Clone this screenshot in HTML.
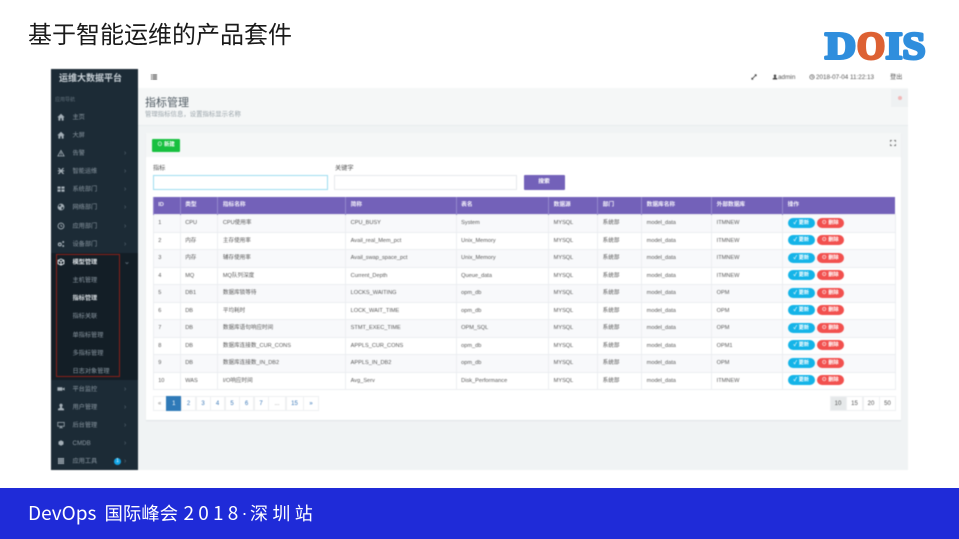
<!DOCTYPE html>
<html lang="zh"><head><meta charset="utf-8"><title>DOIS</title>
<style>
html,body{margin:0;padding:0;background:#fff}
body{width:959px;height:539px;position:relative;overflow:hidden;font-family:"Liberation Sans","Noto Sans CJK SC",sans-serif}
.title{position:absolute;left:28px;top:16px;font-size:24px;line-height:34px;color:#1a1a1a;white-space:nowrap;font-family:"WenQuanYi Zen Hei","Noto Sans CJK SC",sans-serif}
.foot{position:absolute;left:0;top:488px;width:959px;height:51px;background:#1f2bd8}
.foot span{position:absolute;top:10px;color:#fff;font-size:18px;line-height:30px;white-space:nowrap;font-family:"WenQuanYi Zen Hei","Noto Sans CJK SC",sans-serif}
.app{position:absolute;left:51px;top:69px;width:857px;height:401px;background:#f0f3f4;overflow:hidden;filter:blur(.4px);font-size:5.6px;color:#5a5a5a}
.a{position:absolute;white-space:nowrap}
.side{position:absolute;left:0;top:0;width:87px;height:401px;background:#1c2b36}
.brand{position:absolute;left:8px;top:3px;font-size:9px;line-height:12px;font-weight:bold;color:#c8d0d6}
.m{position:absolute;left:0;width:87px;height:18px;line-height:20px;color:#8b98a2;font-size:6.2px}
.m b{position:absolute;left:21.5px;font-weight:normal;white-space:nowrap}
.m svg{position:absolute;left:6px;top:5px;width:8px;height:8px;fill:#a3aeb6}
.m u{position:absolute;left:73px;top:0;text-decoration:none;color:#5a6a76;font-size:7px}
.subbg{position:absolute;left:0;top:184px;width:87px;height:127px;background:#131e26}
.redbox{position:absolute;left:4.5px;top:185px;width:62px;height:121px;border:1px solid #8a2018}
.top{position:absolute;left:87px;top:0;width:770px;height:19px;background:#fff}
.phead{position:absolute;left:87px;top:19px;width:770px;height:38px;background:#f5f7f7;border-bottom:1px solid #e8ecee;box-sizing:border-box}
.card{position:absolute;left:95px;top:64px;width:755px;height:287px;background:#fff;box-shadow:0 1px 1px #dfe4e6}
.chead{position:absolute;left:0;top:0;width:755px;height:24px;background:#f5f7f7}
.btn{position:absolute;background:#17c03f;color:#fff;border-radius:1px;font-weight:bold;text-align:center}
.inp{position:absolute;height:15px;box-sizing:border-box;background:#fff;border:1px solid #e6e9ec}
table{position:absolute;left:101.7px;top:128px;width:743px;border-collapse:collapse;table-layout:fixed;font-size:5.6px;color:#5a5a5a;background:#fff}
th{background:#7361b9;color:#f4f2fb;height:17px;line-height:17px;padding:0 0 0 4.5px;text-align:left;font-weight:bold;border-left:1px solid #9488cc;font-size:5.7px;box-sizing:border-box}
td{height:17.5px;line-height:16.5px;padding:0 0 0 4.5px;border:1px solid #eceef1;box-sizing:border-box;white-space:nowrap;overflow:hidden}
tr:nth-child(odd) td{background:#f8f9fb}
.p{display:inline-block;height:10px;line-height:10px;border-radius:5px;color:#fff;font-size:5.2px;width:27px;text-align:center;vertical-align:middle;font-weight:bold}
.u{background:#14b4e8;margin-right:2px}
.d{background:#f2504e}
.pg{position:absolute;top:327px;height:15px;line-height:15px;text-align:center;background:#fff;border:1px solid #eef0f2;box-sizing:border-box;color:#3a78b8;font-size:6px}
</style></head><body>
<svg width="0" height="0" style="position:absolute"><defs>
<symbol id="home" viewBox="0 0 8 8"><path d="M4 .8 .3 4.2h1.1V7.6h1.9V5.3h1.4v2.3h1.9V4.2h1.1z"/></symbol>
<symbol id="warn" viewBox="0 0 8 8"><path fill-rule="evenodd" d="M4 .6 7.8 7.4H.2zM4 2.2 1.6 6.6h4.8zM3.6 3.4h.8v1.8h-.8zM3.6 5.5h.8v.7h-.8z"/></symbol>
<symbol id="ai" viewBox="0 0 8 8"><path d="M.8 1h1.6l1.6 2 1.6-2h1.6L5.2 3.2h2v1.2H5.3L7.2 7H5.6L4 5 2.4 7H.8l1.9-2.6H.8V3.2h2z"/></symbol>
<symbol id="grid" viewBox="0 0 8 8"><path d="M.5 1.5h3.1v2.2H.5zM4.4 1.5h3.1v2.2H4.4zM.5 4.5h3.1v2.2H.5zM4.4 4.5h3.1v2.2H4.4z"/></symbol>
<symbol id="globe" viewBox="0 0 8 8"><path fill-rule="evenodd" d="M4 .6a3.4 3.4 0 1 0 0 6.8A3.4 3.4 0 0 0 4 .6zM2 2l1.6-.5.4 1.2-1 1.2-1.4-.6zM4.6 4.2l1.8-.2-.4 2-1.4.6z"/></symbol>
<symbol id="clock" viewBox="0 0 8 8"><path fill-rule="evenodd" d="M4 .6a3.4 3.4 0 1 0 0 6.8A3.4 3.4 0 0 0 4 .6zM4 1.5a2.5 2.5 0 1 1 0 5 2.5 2.5 0 0 1 0-5zM3.6 2.4h.7v1.5h1.2v.7H3.6z"/></symbol>
<symbol id="gears" viewBox="0 0 8 8"><path fill-rule="evenodd" d="M2.8 2.4a2 2 0 1 0 0 4 2 2 0 0 0 0-4zM2.8 3.6a.8.8 0 1 1 0 1.6.8.8 0 0 1 0-1.6zM6.2 1a1 1 0 1 0 0 2 1 1 0 0 0 0-2zM6.2 5a1 1 0 1 0 0 2 1 1 0 0 0 0-2z"/></symbol>
<symbol id="cube" viewBox="0 0 8 8"><path fill-rule="evenodd" d="M4 .5 7.4 2v4L4 7.6.6 6V2zM4 1.5 2 2.4 4 3.3l2-.9zM1.6 3.1v2.3l1.9.9V4zM6.4 3.1 4.5 4v2.3l1.9-.9z"/></symbol>
<symbol id="video" viewBox="0 0 8 8"><path d="M.4 2.2h5v3.6h-5zM5.6 3.6l2-1.2v3.2l-2-1.2z"/></symbol>
<symbol id="user" viewBox="0 0 8 8"><path d="M4 .6a1.7 1.7 0 0 1 1.2 2.9L4.9 4.8 7 5.8v1.6H1V5.8l2.1-1-.3-1.3A1.7 1.7 0 0 1 4 .6z"/></symbol>
<symbol id="desk" viewBox="0 0 8 8"><path fill-rule="evenodd" d="M.4 1h7.2v4.6H4.6v.8h1.2v.7H2.2v-.7h1.2v-.8H.4zM1.1 1.7v3.2h5.8V1.7z"/></symbol>
<symbol id="dot" viewBox="0 0 8 8"><path d="M4 1.2 6.5 2.6v2.8L4 6.8 1.5 5.4V2.6z"/></symbol>
<symbol id="table" viewBox="0 0 8 8"><path d="M1 1h1.8v1.8H1zM3.1 1h1.8v1.8H3.1zM5.2 1H7v1.8H5.2zM1 3.1h1.8v1.8H1zM3.1 3.1h1.8v1.8H3.1zM5.2 3.1H7v1.8H5.2zM1 5.2h1.8V7H1zM3.1 5.2h1.8V7H3.1zM5.2 5.2H7V7H5.2z"/></symbol>
</defs></svg>

<div class="title">基于智能运维的产品套件</div>
<svg style="position:absolute;left:820px;top:26px" width="112" height="40" viewBox="0 0 112 40" stroke-linejoin="round">
<text x="5" y="32.6" font-family="Liberation Serif" font-weight="bold" font-size="38" fill="#2f8edd" stroke="#2f8edd" stroke-width="3" textLength="31" lengthAdjust="spacingAndGlyphs">D</text>
<text x="37" y="32.6" font-family="Liberation Serif" font-weight="bold" font-size="38" fill="#dd6133" stroke="#dd6133" stroke-width="3" textLength="28" lengthAdjust="spacingAndGlyphs">O</text>
<text x="65.5" y="32.6" font-family="Liberation Serif" font-weight="bold" font-size="38" fill="#2f8edd" stroke="#2f8edd" stroke-width="3" textLength="17" lengthAdjust="spacingAndGlyphs">I</text>
<text x="82.5" y="32.6" font-family="Liberation Serif" font-weight="bold" font-size="38" fill="#2f8edd" stroke="#2f8edd" stroke-width="3" textLength="23" lengthAdjust="spacingAndGlyphs">S</text>
</svg>

<div class="app">
 <div class="top"></div>
 <svg class="a" style="left:100px;top:5px" width="6" height="6" viewBox="0 0 6 6" fill="#333"><path d="M0 .5h1v1H0zM1.6.5H6v1H1.6zM0 2.5h1v1H0zM1.6 2.5H6v1H1.6zM0 4.5h1v1H0zM1.6 4.5H6v1H1.6z"/></svg>
 <svg class="a" style="left:700px;top:5px" width="6" height="6" viewBox="0 0 7 7" fill="#333"><path d="M4 .5h2.5V3L5.6 2.1 2.1 5.6 3 6.5H.5V4l.9.9 3.5-3.5z"/></svg>
 <svg class="a" style="left:720.5px;top:5px" width="6" height="6" viewBox="0 0 8 8" fill="#444"><use href="#user"/></svg>
 <div class="a" style="left:727px;top:4px;line-height:10px;color:#555;font-size:6.4px">admin</div>
 <svg class="a" style="left:758px;top:5px" width="6" height="6" viewBox="0 0 8 8" fill="#444"><use href="#clock"/></svg>
 <div class="a" style="left:765px;top:4px;line-height:10px;color:#555;font-size:6.3px">2018-07-04 11:22:13</div>
 <div class="a" style="left:839px;top:4px;line-height:10px;color:#555;font-size:6.2px">登出</div>

 <div class="phead"></div>
 <div class="a" style="left:94px;top:27px;font-size:11px;line-height:14px;color:#4f5a62">指标管理</div>
 <div class="a" style="left:94px;top:41px;font-size:6.4px;line-height:9px;color:#9aa4aa">管理指标信息，设置指标显示名称</div>
 <div class="a" style="left:840px;top:20px;width:17px;height:18px;background:#eef1f2"></div>
 <div class="a" style="left:847px;top:27px;width:4px;height:4px;border-radius:50%;background:#f2b8b8"></div>

 <div class="card"><div class="chead"></div></div>
 <div class="btn" style="left:101px;top:69.5px;width:28px;height:13.5px;line-height:13.5px;font-size:5.4px">⊙ 新建</div>
 <svg class="a" style="left:838.5px;top:70.5px" width="6" height="6" viewBox="0 0 7 7" fill="none" stroke="#666" stroke-width=".9"><path d="M.5 2.2V.5h1.7M4.8.5h1.7v1.7M6.5 4.8v1.7H4.8M2.2 6.5H.5V4.8"/></svg>
 <div class="a" style="left:102px;top:95px;font-size:6.2px;line-height:9px;color:#555">指标</div>
 <div class="a" style="left:284px;top:95px;font-size:6.2px;line-height:9px;color:#555">关键字</div>
 <div class="inp" style="left:101.5px;top:106px;width:175px;border-color:#9ddcf0"></div>
 <div class="inp" style="left:283.3px;top:106px;width:182.5px"></div>
 <div class="btn" style="left:472.5px;top:106px;width:41px;height:15px;line-height:15px;background:#7361b9;font-size:5.8px">搜索</div>

 <table>
 <colgroup><col style="width:27px"><col style="width:37.7px"><col style="width:127.8px"><col style="width:110.5px"><col style="width:92.5px"><col style="width:49px"><col style="width:44px"><col style="width:70px"><col style="width:71px"><col></colgroup>
 <thead><tr><th>ID</th><th>类型</th><th>指标名称</th><th>简称</th><th>表名</th><th>数据源</th><th>部门</th><th>数据库名称</th><th>外部数据库</th><th>操作</th></tr></thead>
 <tbody>
 <tr><td>1</td><td>CPU</td><td>CPU使用率</td><td>CPU_BUSY</td><td>System</td><td>MYSQL</td><td>系统部</td><td>model_data</td><td>ITMNEW</td><td><span class="p u">✓ 更新</span><span class="p d">⊙ 删除</span></td></tr>
 <tr><td>2</td><td>内存</td><td>主存使用率</td><td>Avail_real_Mem_pct</td><td>Unix_Memory</td><td>MYSQL</td><td>系统部</td><td>model_data</td><td>ITMNEW</td><td><span class="p u">✓ 更新</span><span class="p d">⊙ 删除</span></td></tr>
 <tr><td>3</td><td>内存</td><td>辅存使用率</td><td>Avail_swap_space_pct</td><td>Unix_Memory</td><td>MYSQL</td><td>系统部</td><td>model_data</td><td>ITMNEW</td><td><span class="p u">✓ 更新</span><span class="p d">⊙ 删除</span></td></tr>
 <tr><td>4</td><td>MQ</td><td>MQ队列深度</td><td>Current_Depth</td><td>Queue_data</td><td>MYSQL</td><td>系统部</td><td>model_data</td><td>ITMNEW</td><td><span class="p u">✓ 更新</span><span class="p d">⊙ 删除</span></td></tr>
 <tr><td>5</td><td>DB1</td><td>数据库锁等待</td><td>LOCKS_WAITING</td><td>opm_db</td><td>MYSQL</td><td>系统部</td><td>model_data</td><td>OPM</td><td><span class="p u">✓ 更新</span><span class="p d">⊙ 删除</span></td></tr>
 <tr><td>6</td><td>DB</td><td>平均耗时</td><td>LOCK_WAIT_TIME</td><td>opm_db</td><td>MYSQL</td><td>系统部</td><td>model_data</td><td>OPM</td><td><span class="p u">✓ 更新</span><span class="p d">⊙ 删除</span></td></tr>
 <tr><td>7</td><td>DB</td><td>数据库语句响应时间</td><td>STMT_EXEC_TIME</td><td>OPM_SQL</td><td>MYSQL</td><td>系统部</td><td>model_data</td><td>OPM</td><td><span class="p u">✓ 更新</span><span class="p d">⊙ 删除</span></td></tr>
 <tr><td>8</td><td>DB</td><td>数据库连接数_CUR_CONS</td><td>APPLS_CUR_CONS</td><td>opm_db</td><td>MYSQL</td><td>系统部</td><td>model_data</td><td>OPM1</td><td><span class="p u">✓ 更新</span><span class="p d">⊙ 删除</span></td></tr>
 <tr><td>9</td><td>DB</td><td>数据库连接数_IN_DB2</td><td>APPLS_IN_DB2</td><td>opm_db</td><td>MYSQL</td><td>系统部</td><td>model_data</td><td>OPM</td><td><span class="p u">✓ 更新</span><span class="p d">⊙ 删除</span></td></tr>
 <tr><td>10</td><td>WAS</td><td>I/O响应时间</td><td>Avg_Serv</td><td>Disk_Performance</td><td>MYSQL</td><td>系统部</td><td>model_data</td><td>ITMNEW</td><td><span class="p u">✓ 更新</span><span class="p d">⊙ 删除</span></td></tr>
 </tbody></table>

 <div class="pg" style="left:101.7px;width:14px;color:#888">«</div>
 <div class="pg" style="left:115.3px;width:15px;background:#2f7ab8;color:#fff;border-color:#2f7ab8">1</div>
 <div class="pg" style="left:130px;width:15px">2</div>
 <div class="pg" style="left:144.5px;width:15px">3</div>
 <div class="pg" style="left:159px;width:15px">4</div>
 <div class="pg" style="left:173.5px;width:15px">5</div>
 <div class="pg" style="left:188px;width:15px">6</div>
 <div class="pg" style="left:202.5px;width:15px">7</div>
 <div class="pg" style="left:217px;width:18px;color:#999">...</div>
 <div class="pg" style="left:234.5px;width:18px">15</div>
 <div class="pg" style="left:252px;width:16px">»</div>

 <div class="pg" style="left:778.5px;width:17px;background:#e6e9ea;color:#555">10</div>
 <div class="pg" style="left:795px;width:17px;color:#555">15</div>
 <div class="pg" style="left:811.5px;width:17px;color:#555">20</div>
 <div class="pg" style="left:828px;width:17px;color:#555">50</div>

 <div class="side">
  <div class="brand">运维大数据平台</div>
  <div class="a" style="left:4px;top:27px;font-size:5px;line-height:8px;color:#62717c">应用导航</div>
  <div class="m" style="top:39px"><svg><use href="#home"/></svg><b>主页</b></div>
  <div class="m" style="top:57px"><svg><use href="#home"/></svg><b>大屏</b></div>
  <div class="m" style="top:75px"><svg><use href="#warn"/></svg><b>告警</b><u>›</u></div>
  <div class="m" style="top:93px"><svg><use href="#ai"/></svg><b>智能运维</b><u>›</u></div>
  <div class="m" style="top:111px"><svg><use href="#grid"/></svg><b>系统部门</b><u>›</u></div>
  <div class="m" style="top:129px"><svg><use href="#globe"/></svg><b>网络部门</b><u>›</u></div>
  <div class="m" style="top:148px"><svg><use href="#clock"/></svg><b>应用部门</b><u>›</u></div>
  <div class="m" style="top:166px"><svg><use href="#gears"/></svg><b>设备部门</b><u>›</u></div>
  <div class="subbg"></div>
  <div class="m" style="top:184px;color:#dfe5e9;font-weight:bold"><svg style="fill:#dfe5e9"><use href="#cube"/></svg><b style="font-weight:bold">模型管理</b><u>⌄</u></div>
  <div class="m" style="top:202px"><b>主机管理</b></div>
  <div class="m" style="top:220px;color:#d6dce0;font-weight:bold"><b style="font-weight:bold">指标管理</b></div>
  <div class="m" style="top:238px"><b>指标关联</b></div>
  <div class="m" style="top:257px"><b>单指标管理</b></div>
  <div class="m" style="top:275px"><b>多指标管理</b></div>
  <div class="m" style="top:293px"><b>日志对象管理</b></div>
  <div class="redbox"></div>
  <div class="m" style="top:311px"><svg><use href="#video"/></svg><b>平台监控</b><u>›</u></div>
  <div class="m" style="top:329px"><svg><use href="#user"/></svg><b>用户管理</b><u>›</u></div>
  <div class="m" style="top:347px"><svg><use href="#desk"/></svg><b>后台管理</b><u>›</u></div>
  <div class="m" style="top:365px"><svg><use href="#dot"/></svg><b>CMDB</b><u>›</u></div>
  <div class="m" style="top:383px"><svg><use href="#table"/></svg><b>应用工具</b><u>›</u></div>
  <div class="a" style="left:63px;top:389px;width:7px;height:7px;border-radius:50%;background:#12a5e6;color:#fff;font-size:5px;line-height:7px;text-align:center">1</div>
 </div>
</div>

<div class="foot"><span style="left:28px;font-size:19px">DevOps</span><span style="left:104.5px;font-size:18.4px">国际峰会</span><span style="left:183.5px;font-size:19px;letter-spacing:4.2px">2018</span><span style="left:241.5px;font-family:'Liberation Sans',sans-serif">·</span><span style="left:250px;letter-spacing:4.4px">深圳站</span></div>
</body></html>
